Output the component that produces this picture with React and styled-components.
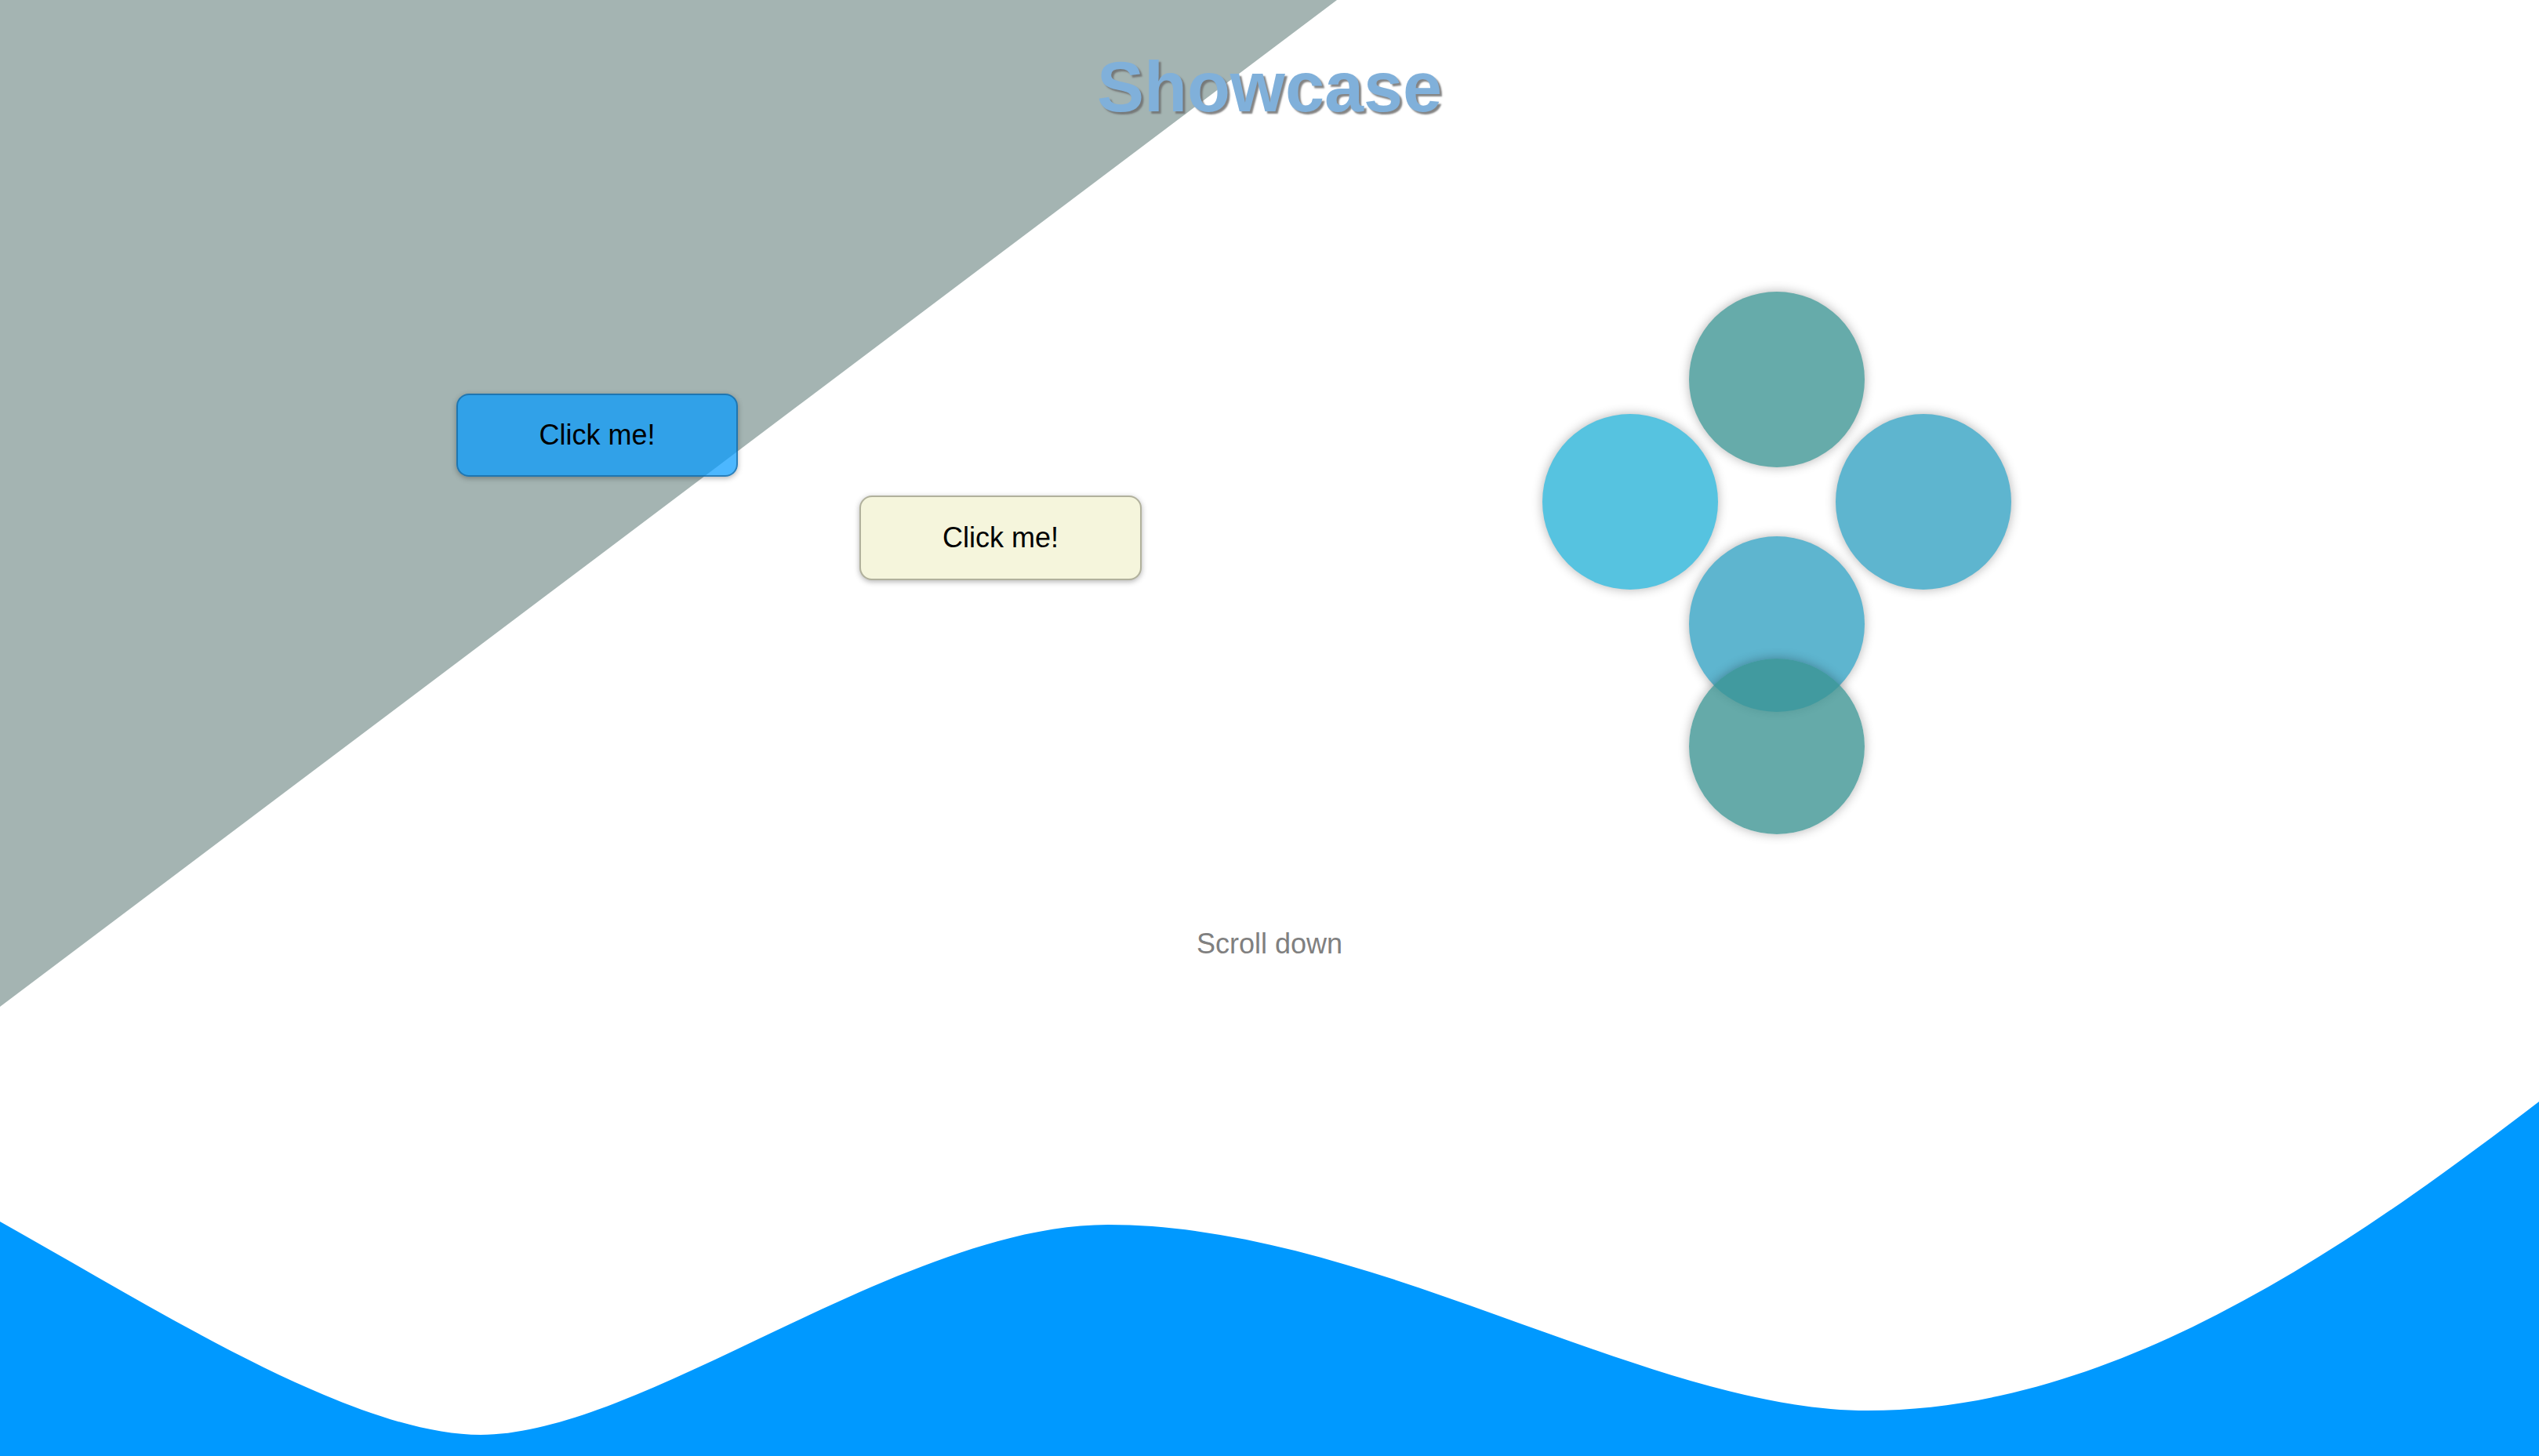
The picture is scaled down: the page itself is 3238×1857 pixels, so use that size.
import React from "react";
import styled, { createGlobalStyle } from "styled-components";

const GlobalStyle = createGlobalStyle`
  html, body {
    margin: 0;
    padding: 0;
    background: #ffffff;
    font-family: "Liberation Sans", Arial, sans-serif;
  }
  * { box-sizing: border-box; }
`;

const Page = styled.div`
  position: relative;
  width: 100%;
  height: 100vh;
  min-height: 1857px;
  overflow: hidden;
  display: flex;
  flex-direction: column;
  background: #ffffff;

  &::before {
    content: "";
    position: absolute;
    inset: 0;
    background: #a4b4b2;
    clip-path: polygon(0 0, 1705px 0, 0 1284px);
    z-index: 0;
  }
`;

const Title = styled.h1`
  position: relative;
  z-index: 1;
  margin: 0;
  padding-top: 66px;
  font-family: "Liberation Sans", Arial, sans-serif;
  font-weight: 700;
  font-size: 90px;
  line-height: 1;
  text-align: center;
  color: #80b0da;
  text-shadow: 3px 3px 2px rgba(110, 110, 110, 0.85);
`;

const Main = styled.main`
  position: relative;
  z-index: 1;
  display: flex;
  align-items: flex-start;
  padding-left: 582px;
`;

const ButtonGrid = styled.div`
  display: grid;
  grid-template-columns: 359px 360px;
  grid-template-rows: 106px 108px;
  column-gap: 155px;
  row-gap: 24px;
  margin-top: 346px;
`;

const ShowButton = styled.button`
  grid-column: ${(p) => p.$col};
  grid-row: ${(p) => p.$row};
  width: 100%;
  height: 100%;
  display: flex;
  align-items: center;
  justify-content: center;
  font-family: "Liberation Sans", Arial, sans-serif;
  font-size: 36px;
  color: #000;
  border-radius: 16px;
  cursor: pointer;
  background: ${(p) => (p.$variant === "blue" ? "rgba(0, 153, 255, 0.7)" : "#f5f5dc")};
  border: 2px solid
    ${(p) => (p.$variant === "blue" ? "rgba(20, 90, 140, 0.6)" : "rgba(165, 165, 145, 0.85)")};
  box-shadow: 0 2px 7px rgba(0, 0, 0, 0.3);
`;

const CircleGrid = styled.div`
  display: grid;
  grid-template-columns: repeat(3, 187px);
  grid-template-rows: repeat(4, 156px);
  margin-top: 250px;
  margin-left: 529px;
`;

const Cell = styled.div`
  grid-column: ${(p) => p.$col};
  grid-row: ${(p) => p.$row};
  display: flex;
  align-items: center;
  justify-content: center;
  min-width: 0;
  min-height: 0;
`;

const Circle = styled.div`
  flex: none;
  width: 224px;
  height: 224px;
  border-radius: 50%;
  background: ${(p) => p.$color};
  box-shadow: 0 0 14px rgba(0, 0, 0, 0.3);
`;

const ScrollHint = styled.p`
  position: relative;
  z-index: 1;
  margin: 156px 0 0;
  font-family: "Liberation Sans", Arial, sans-serif;
  font-size: 36px;
  line-height: 1;
  text-align: center;
  color: #808080;
`;

const WaveSvg = styled.svg`
  display: block;
  margin-top: auto;
  width: 100%;
  height: 460px;
  flex: none;
`;

const circles = [
  { col: 2, row: 1, color: "#66abaa" },
  { col: 1, row: 2, color: "#56c3e0" },
  { col: 3, row: 2, color: "#5eb5cf" },
  { col: 2, row: 3, color: "#5eb5cf" },
  { col: 2, row: 4, color: "rgba(58, 146, 145, 0.78)" },
];

export default function App() {
  return (
    <>
      <GlobalStyle />
      <Page>
        <Title>Showcase</Title>
        <Main>
          <ButtonGrid>
            <ShowButton $variant="blue" $col={1} $row={1}>
              Click me!
            </ShowButton>
            <ShowButton $variant="beige" $col={2} $row={2}>
              Click me!
            </ShowButton>
          </ButtonGrid>
          <CircleGrid>
            {circles.map((c, i) => (
              <Cell key={i} $col={c.col} $row={c.row}>
                <Circle $color={c.color} />
              </Cell>
            ))}
          </CircleGrid>
        </Main>
        <ScrollHint>Scroll down</ScrollHint>
        <WaveSvg viewBox="0 0 3238 460" preserveAspectRatio="none">
          <path
            fill="#0099ff"
            d="M0,161 C200,273 450,433 613,433 C820,433 1150,165 1413,165 C1750,165 2100,402 2382,402 C2700,402 3000,190 3238,8 L3238,460 L0,460 Z"
          />
        </WaveSvg>
      </Page>
    </>
  );
}
